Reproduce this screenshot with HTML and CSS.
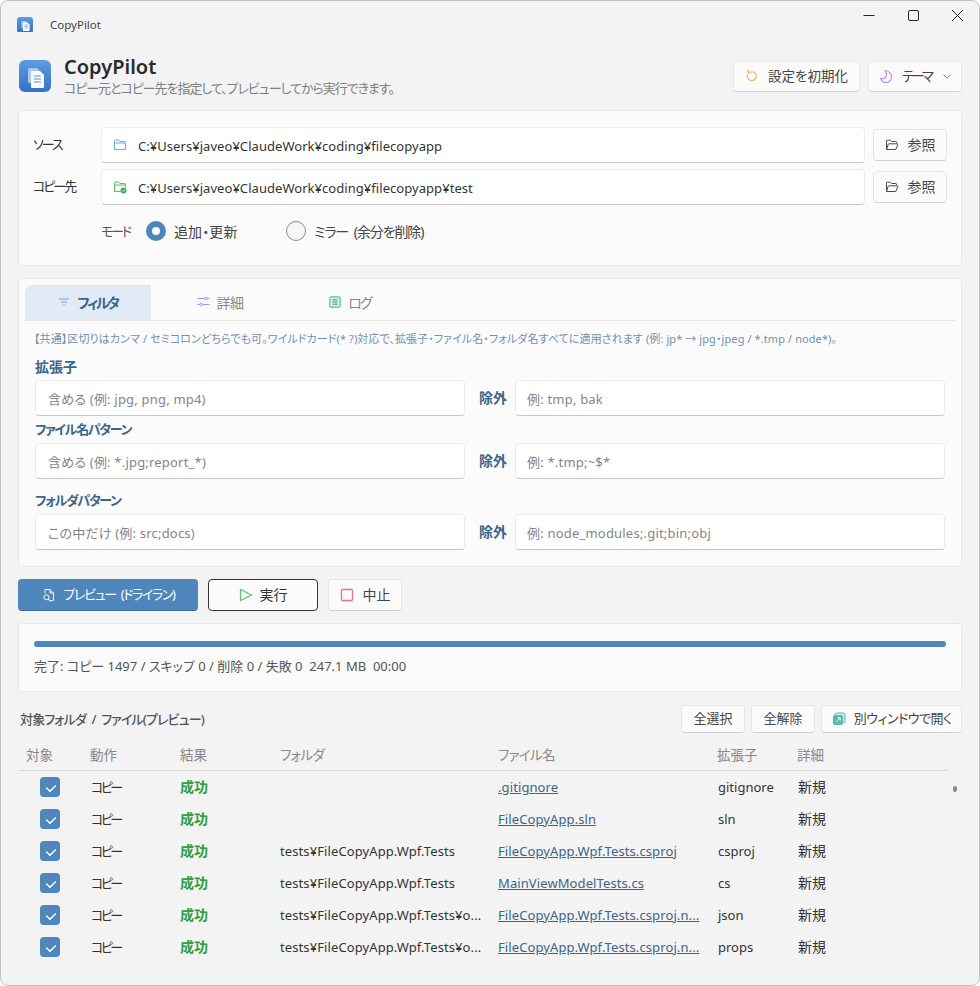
FILE: index.html
```html
<!DOCTYPE html>
<html lang="ja">
<head>
<meta charset="utf-8">
<title>CopyPilot</title>
<link rel="stylesheet" href="styles.css">
</head>
<body>
<svg class="defs" width="0" height="0" aria-hidden="true">
  <defs>
    <linearGradient id="logoGrad" x1="0" y1="0" x2="0" y2="1">
      <stop offset="0" stop-color="#5d9be0"/><stop offset="1" stop-color="#3472c8"/>
    </linearGradient>
    <symbol id="logo" viewBox="0 0 32 32">
      <rect width="32" height="32" rx="6" fill="url(#logoGrad)"/>
      <path d="M11 8h7l2 2v13h-9a2 2 0 0 1-2-2V10a2 2 0 0 1 2-2z" fill="#a9c9f0"/>
      <path d="M13 11h8l4 4v12a1 1 0 0 1-1 1H13a1 1 0 0 1-1-1V12a1 1 0 0 1 1-1z" fill="#fbfdff"/>
      <path d="M15 16h7M15 19h7M15 22h7" stroke="#4f8fdc" stroke-width="1.200" fill="none"/>
    </symbol>
    <symbol id="open-folder" viewBox="0 0 14 14">
      <path d="M1.500 11.500V3a.8.8 0 0 1 .8-.8h3l1.300 1.300h4.200a.8.800 0 0 1 .8.8v1.200M1.500 11.500h9.300l2-4.800a.6.600 0 0 0-.6-.9H4a.8.8 0 0 0-.8.5z" fill="none" stroke="#4a4a4a" stroke-width="1"/>
    </symbol>
  </defs>
</svg>
<div class="window">
  <div class="titlebar">
    <span class="tb-icon"><svg width="16" height="16"><use href="#logo"/></svg></span>
    <span class="tb-title">CopyPilot</span>
    <div class="controls">
      <svg width="44" height="30" viewBox="0 0 44 30"><path d="M16.500 14.500h11" stroke="#222" fill="none"/></svg>
      <svg width="44" height="30" viewBox="0 0 44 30"><rect x="17.500" y="9.500" width="10" height="10" rx="1.500" stroke="#222" fill="none"/></svg>
      <svg width="44" height="30" viewBox="0 0 44 30"><path d="M17 9l11 11M28 9L17 20" stroke="#222" fill="none"/></svg>
    </div>
  </div>

  <div class="content">
    <header class="header">
      <svg class="logo" width="32" height="32"><use href="#logo"/></svg>
      <div class="head-text">
        <h1 class="app-name">CopyPilot</h1>
        <p class="app-sub">コピー元とコピー先を指定して、プレビューしてから実行できます。</p>
      </div>
      <div class="head-actions">
        <button class="btn btn-reset">
          <svg width="14" height="14" viewBox="0 0 14 14"><path d="M2.800 3h6a4.500 4.500 0 1 1-6.300 2.700M2.800 3L3.500 .8M2.800 3L4.800 4.800" fill="none" stroke="#f0b04a" stroke-width="1.200"/></svg>
          <span>設定を初期化</span>
        </button>
        <button class="btn btn-theme">
          <svg width="14" height="14" viewBox="0 0 14 14"><path d="M6 1.500c3.500.3 6.500 2.800 6.500 6a5.500 5.500 0 0 1-10.800 2c3 1 6-1.300 5.800-3.700C7.400 4.300 6.800 2.800 6 1.500z" fill="none" stroke="#b68cf2" stroke-width="1.200"/></svg>
          <span class="kana-tight">テーマ</span>
          <svg class="chev" width="8" height="5" viewBox="0 0 8 5"><path d="M.5.800L4 4.200 7.500.8" fill="none" stroke="#777"/></svg>
        </button>
      </div>
    </header>

    <section class="panel panel-source">
      <div class="path-row">
        <label class="path-label">ソース</label>
        <div class="input path-input">
          <svg width="14" height="14" viewBox="0 0 14 14"><path d="M1.500 11.500V2.800a.8.800 0 0 1 .8-.8h3.200l1.300 1.500h4.900a.8.800 0 0 1 .8.800v7.200z M1.500 5h11" fill="none" stroke="#66aaf5" stroke-width="1"/></svg>
          <span>C:¥Users¥javeo¥ClaudeWork¥coding¥filecopyapp</span>
        </div>
        <button class="btn btn-browse"><svg width="14" height="14"><use href="#open-folder"/></svg><span>参照</span></button>
      </div>
      <div class="path-row">
        <label class="path-label">コピー先</label>
        <div class="input path-input">
          <svg width="14" height="14" viewBox="0 0 14 14"><path d="M7.500 11.500H1.500V2.800a.8.800 0 0 1 .8-.8h3.200l1.300 1.500h4.900a.8.800 0 0 1 .8.800v3.200M1.500 5h11" fill="none" stroke="#4fc25e" stroke-width="1"/><circle cx="10.500" cy="10.500" r="3" fill="#38b24b"/><path d="M9.200 10.500l1 1 1.600-1.800" stroke="#fff" stroke-width=".8" fill="none"/></svg>
          <span>C:¥Users¥javeo¥ClaudeWork¥coding¥filecopyapp¥test</span>
        </div>
        <button class="btn btn-browse"><svg width="14" height="14"><use href="#open-folder"/></svg><span>参照</span></button>
      </div>
      <div class="mode-row">
        <span class="mode-label">モード</span>
        <span class="radio radio-on"></span><span class="radio-text radio-text-a">追加・更新</span>
        <span class="radio"></span><span class="radio-text radio-text-b">ミラー (余分を削除)</span>
      </div>
    </section>

    <section class="panel panel-filter">
      <div class="tabs">
        <div class="tab tab-active">
          <svg width="12" height="12" viewBox="0 0 12 12"><path d="M1 3h10M3 6h6M5 9h2" stroke="#66aaf5" stroke-width="1.200" fill="none"/></svg>
          <span>フィルタ</span>
        </div>
        <div class="tab">
          <svg width="13" height="13" viewBox="0 0 13 13"><path d="M.5 3.500h7M10 3.500h2.500M.5 9.500H3M5.500 9.500h7" stroke="#b68cf2" fill="none"/><circle cx="8.800" cy="3.500" r="1.300" fill="none" stroke="#b68cf2"/><circle cx="4.200" cy="9.500" r="1.300" fill="none" stroke="#b68cf2"/></svg>
          <span>詳細</span>
        </div>
        <div class="tab tab-log">
          <svg width="12" height="12" viewBox="0 0 12 12"><rect x=".8" y=".8" width="10.400" height="10.400" rx="1.500" fill="#d8f0ec" stroke="#55bdb0" stroke-width="1.200"/><path d="M3.500 3.800h5M3.500 6h5M3.500 8.200h5" stroke="#4a8f88" fill="none"/></svg>
          <span>ログ</span>
        </div>
      </div>
      <p class="hint">【共通】区切りはカンマ / セミコロンどちらでも可。ワイルドカード(* ?)対応で、拡張子・ファイル名・フォルダ名すべてに適用されます (例: jp* → jpg・jpeg / *.tmp / node*)。</p>

      <div class="field-label fl-ext">拡張子</div>
      <div class="filter-row">
        <div class="input filter-input">含める (例: jpg, png, mp4)</div>
        <span class="except">除外</span>
        <div class="input filter-input filter-ex">例: tmp, bak</div>
      </div>
      <div class="field-label fl-name">ファイル名パターン</div>
      <div class="filter-row">
        <div class="input filter-input">含める (例: *.jpg;report_*)</div>
        <span class="except">除外</span>
        <div class="input filter-input filter-ex">例: *.tmp;~$*</div>
      </div>
      <div class="field-label fl-folder">フォルダパターン</div>
      <div class="filter-row">
        <div class="input filter-input">この中だけ (例: src;docs)</div>
        <span class="except">除外</span>
        <div class="input filter-input filter-ex">例: node_modules;.git;bin;obj</div>
      </div>
    </section>

    <div class="actions">
      <button class="btn btn-primary">
        <svg width="14" height="14" viewBox="0 0 14 14"><path d="M3 5.500V2.200a.7.700 0 0 1 .7-.7h4.300l3.500 3.500v7a.7.700 0 0 1-.7.700H7.500M8 1.500V5h3.500" fill="none" stroke="#fff"/><circle cx="4.500" cy="9.300" r="2.500" fill="none" stroke="#fff"/><path d="M6.300 11l1.500 1.800" stroke="#fff"/></svg>
        <span>プレビュー (ドライラン)</span>
      </button>
      <button class="btn btn-run">
        <svg width="14" height="14" viewBox="0 0 14 14"><path d="M1.500 1.500l11 5.500-11 5.500z" fill="none" stroke="#5cc46c" stroke-width="1.200"/></svg>
        <span>実行</span>
      </button>
      <button class="btn btn-stop">
        <svg width="14" height="14" viewBox="0 0 14 14"><rect x="1.500" y="1.500" width="11" height="11" rx="1" fill="none" stroke="#f0727c" stroke-width="1.300"/></svg>
        <span>中止</span>
      </button>
    </div>

    <section class="panel panel-progress">
      <div class="bar"></div>
      <p class="status">完了: コピー 1497 / スキップ 0 / 削除 0 / 失敗 0&nbsp; 247.1 MB&nbsp; 00:00</p>
    </section>

    <div class="list-head">
      <h2 class="list-title">対象フォルダ / ファイル(プレビュー)</h2>
      <div class="list-actions">
        <button class="btn btn-sm">全選択</button>
        <button class="btn btn-sm">全解除</button>
        <button class="btn btn-sm btn-open">
          <svg width="14" height="14" viewBox="0 0 14 14"><rect x="3" y="1" width="10" height="10" rx="2" fill="#d8f0ec" stroke="#55bdb0"/><rect x="1" y="3" width="10" height="10" rx="2" fill="#55bdb0"/><path d="M4.500 9.500L8 6M5.500 5.800H8.200V8.500" stroke="#fff" fill="none"/></svg>
          <span class="open-text">別ウィンドウで開く</span>
        </button>
      </div>
    </div>

    <div class="table">
      <div class="tr th">
        <span>対象</span><span>動作</span><span>結果</span><span class="kana-head">フォルダ</span><span class="kana-head">ファイル名</span><span>拡張子</span><span>詳細</span>
      </div>
      <div class="tr">
        <span class="cell-check"><i class="check"></i></span><span class="op">コピー</span><span class="ok">成功</span><span></span><a class="file">.gitignore</a><span class="ext">gitignore</span><span class="new">新規</span>
      </div>
      <div class="tr">
        <span class="cell-check"><i class="check"></i></span><span class="op">コピー</span><span class="ok">成功</span><span></span><a class="file">FileCopyApp.sln</a><span class="ext">sln</span><span class="new">新規</span>
      </div>
      <div class="tr">
        <span class="cell-check"><i class="check"></i></span><span class="op">コピー</span><span class="ok">成功</span><span class="folder">tests¥FileCopyApp.Wpf.Tests</span><a class="file">FileCopyApp.Wpf.Tests.csproj</a><span class="ext">csproj</span><span class="new">新規</span>
      </div>
      <div class="tr">
        <span class="cell-check"><i class="check"></i></span><span class="op">コピー</span><span class="ok">成功</span><span class="folder">tests¥FileCopyApp.Wpf.Tests</span><a class="file">MainViewModelTests.cs</a><span class="ext">cs</span><span class="new">新規</span>
      </div>
      <div class="tr">
        <span class="cell-check"><i class="check"></i></span><span class="op">コピー</span><span class="ok">成功</span><span class="folder">tests¥FileCopyApp.Wpf.Tests¥o...</span><a class="file">FileCopyApp.Wpf.Tests.csproj.n...</a><span class="ext">json</span><span class="new">新規</span>
      </div>
      <div class="tr">
        <span class="cell-check"><i class="check"></i></span><span class="op">コピー</span><span class="ok">成功</span><span class="folder">tests¥FileCopyApp.Wpf.Tests¥o...</span><a class="file">FileCopyApp.Wpf.Tests.csproj.n...</a><span class="ext">props</span><span class="new">新規</span>
      </div>
      <span class="scroll-dot"></span>
    </div>
  </div>
</div>
</body>
</html>
```

FILE: styles.css
```css
* { box-sizing: border-box; }
html, body { margin: 0; padding: 0; background: #fff; }
body {
  width: 980px;
  height: 986px;
  overflow: hidden;
  font-family: "Noto Sans", "Noto Sans CJK JP", sans-serif;
  font-size: 13px;
  color: #333;
  font-feature-settings: "palt";
}
.defs { position: absolute; }
svg { flex: none; display: block; }
button { font: inherit; color: inherit; cursor: default; }
h1, h2, p { margin: 0; font-weight: normal; }

.window {
  width: 980px;
  height: 986px;
  border: 1px solid #c2c2c2;
  border-radius: 8px;
  background: #f3f3f3;
  overflow: hidden;
  display: flex;
  flex-direction: column;
}
.titlebar { height: 50px; display: flex; align-items: flex-start; padding-left: 16px; }
.tb-icon { display: block; height: 15px; margin-top: 16px; overflow: hidden; }
.tb-title { margin: 15px 0 0 17px; font-size: 11.500px; line-height: 17px; color: #444; }
.controls { margin-left: auto; display: flex; margin-right: 0; }
.controls svg { height: 30px; }

.content { padding: 0 17px; display: flex; flex-direction: column; }
.header { height: 50px; display: flex; align-items: center; padding-left: 1px; }
.logo { margin-right: 13px; }
.head-text { display: flex; flex-direction: column; margin-top: -1px; }
.app-name { font-size: 20px; font-weight: 600; line-height: 26px; color: #2b2b2b; }
.app-sub { font-size: 13px; line-height: 17px; color: #808080; letter-spacing: -1.050px; }
.head-actions { margin-left: auto; display: flex; gap: 8px; }

.btn {
  display: inline-flex;
  align-items: center;
  justify-content: center;
  padding: 0 0 3px;
  background: #fbfbfb;
  border: 1px solid #e6e6e6;
  border-bottom-color: #d0d0d0;
  border-radius: 4px;
  font-size: 13.500px;
  color: #444;
}
.btn svg { margin-top: 3px; }
.btn-reset { width: 127px; height: 31px; gap: 9px; }
.btn-theme { width: 94px; height: 31px; gap: 9px; }
.kana-tight { letter-spacing: -3px; }
.chev { margin-left: 3px; }

.panel {
  background: #fbfbfb;
  border: 1px solid #e8e8e8;
  border-radius: 4px;
}
.panel-source { margin-top: 9px; height: 156px; padding: 16px 14px 0; }
.path-row { display: flex; align-items: center; height: 36px; margin-bottom: 6px; }
.path-label { width: 68px; padding-bottom: 3px; font-size: 13px; color: #333; letter-spacing: -2px; }
.input {
  display: flex;
  align-items: center;
  height: 36px;
  background: #fff;
  border: 1px solid #ececec;
  border-bottom-color: #c6c6c6;
  border-radius: 4px;
}
.path-input { width: 764px; margin-right: 8px; padding-left: 11px; gap: 11px; font-size: 13px; letter-spacing: .050px; color: #333; }
.path-input span { padding-top: 2px; }
.btn-browse { width: 74px; height: 32px; gap: 9px; font-size: 14px; }
.mode-row { display: flex; align-items: center; height: 28px; margin-top: 12px; padding-left: 68px; }
.mode-label { width: 45px; padding-bottom: 2px; font-size: 13px; color: #555; letter-spacing: -2.200px; }
.radio { width: 20px; height: 20px; border-radius: 50%; border: 1px solid #8a8a8a; background: #f6f6f6; margin-right: 8px; }
.radio-on { border: 6px solid #4f86bb; background: #fff; }
.radio-text { font-size: 14px; color: #444; }
.radio-text-a { width: 112px; letter-spacing: .100px; }
.radio-text-b { letter-spacing: -1.100px; word-spacing: 3px; }

.panel-filter { margin-top: 12px; height: 289px; padding: 6px 6px 0; }
.tabs { display: grid; grid-template-columns: 126px 138px 122px; height: 36px; border-bottom: 1px solid #e8e8e8; }
.tab {
  display: flex;
  align-items: center;
  justify-content: center;
  gap: 7px;
  font-size: 14px;
  color: #888;
  padding-bottom: 2px;
}
.tab span { letter-spacing: -.600px; }
.tab-active { background: #e1ebf5; border-radius: 7px 0 0 0; color: #3c6589; font-weight: 600; }
.tab-active span { letter-spacing: -2.400px; }
.tab-log span { letter-spacing: -1.800px; }
.hint { margin: 10px 0 0 9px; font-size: 11px; line-height: 16px; letter-spacing: .090px; color: #6f90b3; white-space: nowrap; }
.field-label { margin-left: 10px; height: 20px; line-height: 20px; font-size: 13px; font-weight: 600; color: #3c6589; letter-spacing: -1.300px; }
.fl-ext { margin-top: 10px; margin-bottom: 3px; font-size: 14px; letter-spacing: 0; }
.fl-name { margin-top: 3px; margin-bottom: 4px; }
.fl-folder { margin-top: 11px; margin-bottom: 4px; }
.filter-row { display: flex; align-items: center; margin-left: 10px; }
.filter-input { width: 430px; padding-left: 12px; font-size: 13px; letter-spacing: .200px; color: #858585; }
.filter-ex { padding-left: 11px; }
.except { width: 50px; padding: 0 0 2px 14px; font-size: 14px; font-weight: 600; color: #3c6589; }

.actions { margin-top: 12px; display: flex; gap: 10px; }
.btn-primary { width: 180px; height: 32px; gap: 8px; background: #4f86bb; border-color: #4f86bb; border-bottom-color: #3c6a96; color: #fff; font-size: 13px; letter-spacing: -1.400px; word-spacing: 3px; }
.btn-run { width: 110px; height: 32px; gap: 7px; border-color: #333; color: #333; background: #fbfbfb; font-size: 14px; }
.btn-stop { width: 74px; height: 32px; gap: 9px; font-size: 14px; }

.panel-progress { margin-top: 12px; height: 69px; padding: 17px 15px 0; }
.bar { height: 6px; border-radius: 3px; background: #4f86bb; }
.status { margin-top: 10px; font-size: 13px; line-height: 18px; color: #555; }

.list-head { margin-top: 13px; height: 28px; display: flex; align-items: center; justify-content: space-between; padding-left: 2px; }
.list-title { font-size: 13px; font-weight: 500; color: #555; letter-spacing: -.850px; word-spacing: 3px; padding-bottom: 2px; }
.list-actions { display: flex; gap: 6px; }
.btn-sm { width: 64px; height: 28px; font-size: 13px; }
.btn-open { width: 141px; gap: 8px; }
.open-text { letter-spacing: -.500px; }

.table { position: relative; margin-top: 7px; width: 930px; }
.tr {
  display: grid;
  grid-template-columns: 72px 90px 100px 218px 219px 80px 1fr;
  align-items: center;
  height: 32px;
  font-size: 13px;
  color: #333;
  white-space: nowrap;
}
.th { height: 31px; border-bottom: 1px solid #d9d9d9; color: #888; font-size: 13.500px; padding-bottom: 3px; }
.th span:first-child { padding-left: 8px; }
.kana-head { letter-spacing: -.700px; }
.cell-check { padding-left: 22px; display: flex; }
.check {
  display: block;
  width: 20px;
  height: 20px;
  border-radius: 4px;
  background-color: #4f86bb;
  position: relative;
}
.check::after {
  content: "";
  position: absolute;
  left: 7px;
  top: 4px;
  width: 6px;
  height: 10px;
  border: solid #fff;
  border-width: 0 2px 2px 0;
  transform: rotate(45deg) scale(.75);
}
.op { padding: 0 0 2px 1px; letter-spacing: -2.600px; }
.ok { color: #2f9e44; font-size: 14px; font-weight: 700; padding-bottom: 2px; }
.new { font-size: 14px; padding: 0 0 2px 1px; }
.ext { padding-left: 1px; }
.folder { letter-spacing: .100px; }
.file { color: #3c6589; text-decoration: underline; letter-spacing: .100px; }
.scroll-dot { position: absolute; left: 935px; top: 46px; width: 4px; height: 6px; border-radius: 2px; background: #8a8a8a; }
```
